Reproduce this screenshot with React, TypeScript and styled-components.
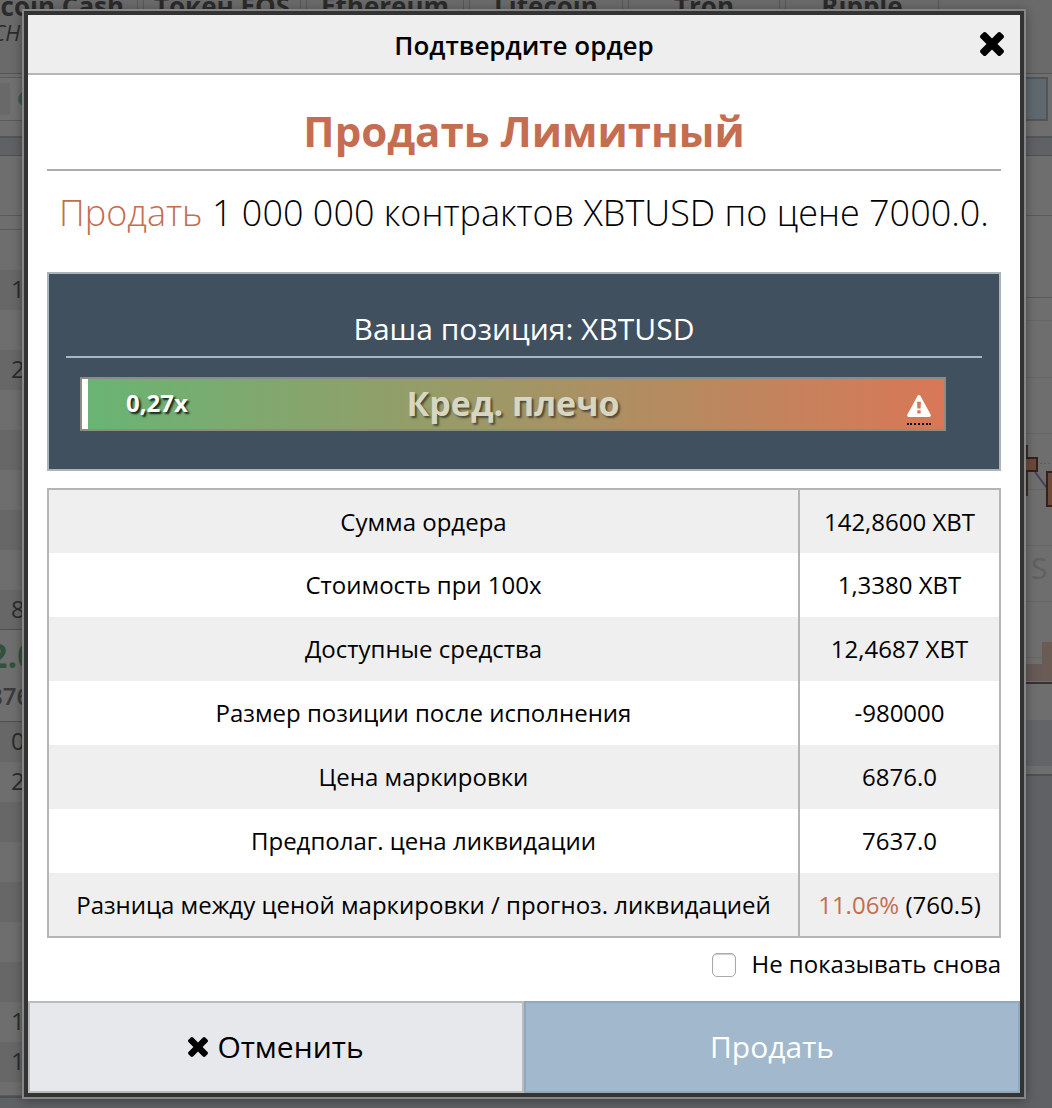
import React, { useState } from "react";
import styled, { createGlobalStyle } from "styled-components";

const GlobalStyle = createGlobalStyle`
  *, *::before, *::after { box-sizing: border-box; }
  body {
    margin: 0;
    background: #606164;
    color: #000;
    font-family: "Open Sans", "Noto Sans", sans-serif;
  }
`;

const Page = styled.div`
  position: relative;
  min-height: 100vh;
  overflow: hidden;
`;

/* ---------- dimmed trading screen ---------- */

const Screen = styled.div`
  display: flex;
  flex-direction: column;
  min-height: 100vh;
  color: #2b2b2b;
`;

const Markets = styled.nav`
  display: grid;
  grid-template-columns: 188px 158px 158px 154px 152px 154px;
  column-gap: 5px;
  height: 73px;
  margin-left: -50px;
  overflow: hidden;
  background: #6a6a6a;
`;

const Market = styled.div`
  display: flex;
  flex-direction: column;
  border: solid #585858;
  border-width: 0 1px;
  margin-top: -12px;
  font-size: 26px;
  line-height: 36px;
  font-weight: 700;
  text-align: center;
  white-space: nowrap;
`;

const Ticker = styled.span`
  padding-left: 28px;
  font-size: 22px;
  line-height: 16px;
  font-weight: 400;
  font-style: italic;
  text-align: left;
`;

const TradeBar = styled.div`
  display: flex;
  justify-content: space-between;
  height: 65px;
  padding: 3px 4px 15px 0;
  border: solid #555;
  border-width: 1px 0 2px;
  background: #6e6e6e;
`;

const TradeField = styled.div`
  display: flex;
  align-items: center;
  gap: 8px;
  width: 40%;
  border: solid #5a5a5a;
  border-width: 1px 0;
  background: #707070;

  &::before {
    content: "";
    width: 10px;
    height: 32px;
    background: #696969;
  }

  &::after {
    content: "";
    width: 14px;
    height: 14px;
    border-radius: 50%;
    background: #3c5a4e;
  }
`;

const TradeAction = styled.div`
  width: 20%;
  border: 2px solid #4e565c;
  background: #5f686e;
`;

const Panels = styled.div`
  display: flex;
  align-items: flex-start;
  gap: 20px;
  padding-top: 17px;
`;

const Panel = styled.section`
  flex: 1;
  border: solid #505050;
  border-width: 1px 0 2px;
  background: #6e6e6e;
`;

const PanelHead = styled.div<{ $height: number }>`
  height: ${(p) => p.$height}px;
  border-bottom: 1px solid #5a5a5a;
`;

const BookRow = styled.div<{ $dark?: boolean }>`
  height: 40px;
  padding-left: 11px;
  background: ${(p) => (p.$dark ? "#676767" : "#6e6e6e")};
  font-size: 24px;
  line-height: 38px;
`;

const LastPrice = styled.div`
  height: 93px;
  margin: -1px 0 0;
  border: solid #4f4f4f;
  border-width: 1px 0;
  overflow: hidden;
`;

const Price = styled.div`
  margin-left: -12px;
  color: #31513e;
  font-size: 34px;
  line-height: 50px;
  font-weight: 700;
`;

const MarkPrice = styled.div`
  margin-left: -11px;
  color: #3a3a3a;
  font-size: 24px;
  line-height: 32px;
  font-weight: 600;
`;

const Chart = styled.svg`
  display: block;
  margin-left: auto;
`;

const ChartTools = styled.div`
  height: 46px;
  margin: 36px 0 8px;
  background: #636468;
`;

const asks = ["", "1", "", "2", "", "", "", "", "", "8"];
const bids = ["0", "2", "", "", "", "", "", "1", "1"];

function TradingScreen() {
  return (
    <Screen aria-hidden="true">
      <Markets>
        <Market>
          Bitcoin Cash
          <Ticker>BCH</Ticker>
        </Market>
        <Market>Токен EOS</Market>
        <Market>Ethereum</Market>
        <Market>Litecoin</Market>
        <Market>Tron</Market>
        <Market>Ripple</Market>
      </Markets>
      <TradeBar>
        <TradeField />
        <TradeAction />
      </TradeBar>
      <Panels>
        <Panel>
          <PanelHead $height={60} />
          <PanelHead $height={14} />
          {asks.map((value, i) => (
            <BookRow key={i} $dark={i % 2 === 1}>
              {value}
            </BookRow>
          ))}
          <LastPrice>
            <Price>2.0</Price>
            <MarkPrice>876</MarkPrice>
          </LastPrice>
          {bids.map((value, i) => (
            <BookRow key={i} $dark={i % 2 === 0}>
              {value}
            </BookRow>
          ))}
          <PanelHead $height={14} />
        </Panel>
        <Panel>
          <PanelHead $height={60} />
          <PanelHead $height={82} />
          <Chart width="28" height="386" viewBox="0 0 28 386">
            {[22, 79, 135, 191, 247, 303, 359].map((y) => (
              <path key={y} d={`M0 ${y}.5H28`} stroke="#666" />
            ))}
            <path d="M0 165.500H28" stroke="#5a5a5a" strokeDasharray="2 2" />
            <path d="M3 147V198" stroke="#3d2c2a" strokeWidth="2" />
            <path d="M11 174L23 190" stroke="#4d3c58" strokeWidth="2" />
            <rect x="1" y="160" width="12" height="13" fill="#6d4a38" stroke="#33211d" strokeWidth="2" />
            <rect x="23" y="174" width="8" height="34" fill="#6d4a38" stroke="#33211d" strokeWidth="2" />
            <text x="7" y="281" fontSize="30" fill="#606060">S</text>
            <rect x="0" y="366" width="18" height="17" fill="#665956" />
            <rect x="18" y="344" width="10" height="39" fill="#6a5c55" />
            <path d="M0 385H28" stroke="#333" strokeWidth="2" />
          </Chart>
          <ChartTools />
        </Panel>
      </Panels>
    </Screen>
  );
}

/* ---------- confirmation dialog ---------- */

const Overlay = styled.div`
  position: absolute;
  inset: 0;
  padding: 9px 26px 9px 22px;
`;

const Dialog = styled.div`
  border: 2px solid #868686;
  background: #333;
  padding: 4px;
  box-shadow: 0 2px 10px rgba(0, 0, 0, 0.35);
`;

const Header = styled.header`
  display: flex;
  align-items: center;
  height: 60px;
  padding: 0 16px;
  border-bottom: 2px solid #b3b5b6;
  background: #eee;
`;

const HeaderTitle = styled.h2`
  flex: 1;
  margin: 0;
  padding: 2px 0 0 24px;
  font-size: 26px;
  line-height: 32px;
  font-weight: 600;
  text-align: center;
`;

const CloseButton = styled.button`
  display: flex;
  padding: 0;
  border: 0;
  background: none;
  color: #000;
  cursor: pointer;
`;

const Body = styled.div`
  padding: 22px 19px 21px;
  background: #fff;
`;

const OrderKind = styled.h1`
  margin: 0;
  padding: 2px 0 6px;
  border-bottom: 2px solid #acacac;
  color: #c46d51;
  font-size: 42px;
  line-height: 64px;
  font-weight: 700;
  text-align: center;
`;

const Summary = styled.p`
  margin: 12px 0 29px;
  font-size: 36px;
  line-height: 60px;
  font-weight: 300;
  text-align: center;
`;

const Sell = styled.span`
  color: #c46d51;
`;

const Position = styled.section`
  margin-bottom: 17px;
  padding: 32px 17px 38px;
  border: 2px solid #aab4bb;
  background: #40505f;
`;

const PositionTitle = styled.h3`
  margin: 0 0 19px;
  padding-bottom: 4px;
  border-bottom: 2px solid #a9b9c4;
  color: #fff;
  font-size: 30px;
  line-height: 46px;
  font-weight: 400;
  text-align: center;
`;

const Leverage = styled.div`
  display: grid;
  grid-template-columns: 1fr auto 1fr;
  height: 54px;
  margin: 0 36px 0 14px;
  border: 2px solid #8b8d84;
  background: linear-gradient(90deg, #68b574 0%, #d97757 100%);
  line-height: 48px;
  font-weight: 700;
  text-shadow: 2px 2px 2px rgba(0, 0, 0, 0.8);
`;

const LeverageValue = styled.span`
  padding-left: 38px;
  border-left: 6px solid #fff;
  color: #fff;
  font-size: 24px;
`;

const LeverageLabel = styled.span`
  color: #d6d6c2;
  font-size: 34px;
  text-shadow: 2px 2px 2px rgba(0, 0, 0, 0.5);
`;

const Risk = styled.span`
  align-self: end;
  justify-self: end;
  display: flex;
  margin: 0 13px 4px 0;
  padding-bottom: 6px;
  border-bottom: 2px dotted #000;
  color: #fff;
`;

const Details = styled.table`
  width: 100%;
  border: 2px solid #b5b5b5;
  border-collapse: collapse;
  font-size: 24px;
  line-height: 32px;
  text-align: center;
`;

const DetailRow = styled.tr`
  &:nth-child(odd) {
    background: #efefef;
  }
`;

const DetailName = styled.th`
  height: 64px;
  padding: 0 8px;
  border-right: 2px solid #b5b5b5;
  font-weight: 400;
`;

const DetailValue = styled.td`
  width: 201px;
  padding: 0;
  white-space: nowrap;
`;

const Mute = styled.label`
  display: flex;
  align-items: center;
  justify-content: flex-end;
  gap: 15px;
  margin-top: 10px;
  font-size: 24px;
  line-height: 32px;
`;

const Checkbox = styled.input`
  appearance: none;
  width: 24px;
  height: 24px;
  margin: 2px 0 0;
  border: 1px solid #aaa;
  border-radius: 5px;
  background: #fff;
  box-shadow: inset 0 1px 1px rgba(0, 0, 0, 0.2);

  &:checked {
    background: #a2b8cc;
  }
`;

const Footer = styled.footer`
  display: grid;
  grid-template-columns: 1fr 1fr;
`;

const FooterButton = styled.button<{ $primary?: boolean }>`
  display: flex;
  align-items: center;
  justify-content: center;
  gap: 9px;
  height: 92px;
  padding: 0;
  border: 2px solid ${(p) => (p.$primary ? "#8fa8bb" : "#b9bbbd")};
  background: ${(p) => (p.$primary ? "#a2b8cc" : "#e7e8ec")};
  color: ${(p) => (p.$primary ? "#fff" : "#000")};
  font-family: inherit;
  font-size: 30px;
  line-height: 44px;
  cursor: pointer;
`;

function TimesIcon({ size }: { size: number }) {
  return (
    <svg width={size} height={size} viewBox="302 366 1188 1188" fill="currentColor" aria-hidden="true">
      <path d="M1490 1322q0 40-28 68l-136 136q-28 28-68 28t-68-28l-294-294-294 294q-28 28-68 28t-68-28l-136-136q-28-28-28-68t28-68l294-294-294-294q-28-28-28-68t28-68l136-136q28-28 68-28t68 28l294 294 294-294q28-28 68-28t68 28l136 136q28 28 28 68t-28 68l-294 294 294 294q28 28 28 68z" />
    </svg>
  );
}

function WarningIcon() {
  return (
    <svg width="24" height="22" viewBox="0 0 1792 1664" fill="currentColor" role="img" aria-label="!">
      <path d="M1024 1375v-190q0-14-9.500-23.500t-22.500-9.500h-192q-13 0-22.500 9.500t-9.500 23.500v190q0 14 9.500 23.500t22.500 9.500h192q13 0 22.500-9.500t9.500-23.500zm-2-374l18-459q0-12-10-19-13-11-24-11h-220q-11 0-24 11-10 7-10 21l17 457q0 10 10 16.500t24 6.500h185q14 0 23.500-6.500t10.500-16.500zm-14-934l768 1408q35 63-2 126-17 29-46.500 46t-63.500 17h-1536q-34 0-63.500-17t-46.500-46q-37-63-2-126l768-1408q17-31 47-49t65-18 65 18 47 49z" />
    </svg>
  );
}

const details: { name: string; value: React.ReactNode }[] = [
  { name: "Сумма ордера", value: "142,8600 XBT" },
  { name: "Стоимость при 100x", value: "1,3380 XBT" },
  { name: "Доступные средства", value: "12,4687 XBT" },
  { name: "Размер позиции после исполнения", value: "-980000" },
  { name: "Цена маркировки", value: "6876.0" },
  { name: "Предполаг. цена ликвидации", value: "7637.0" },
  {
    name: "Разница между ценой маркировки / прогноз. ликвидацией",
    value: (
      <>
        <Sell>11.06%</Sell> (760.5)
      </>
    ),
  },
];

export default function App() {
  const [muted, setMuted] = useState(false);

  return (
    <Page>
      <GlobalStyle />
      <TradingScreen />
      <Overlay>
        <Dialog role="dialog" aria-modal="true" aria-labelledby="dialog-title">
          <Header>
            <HeaderTitle id="dialog-title">Подтвердите ордер</HeaderTitle>
            <CloseButton type="button" aria-label="Отменить">
              <TimesIcon size={24} />
            </CloseButton>
          </Header>
          <Body>
            <OrderKind>Продать Лимитный</OrderKind>
            <Summary>
              <Sell>Продать</Sell> 1 000 000 контрактов XBTUSD по цене 7000.0.
            </Summary>
            <Position>
              <PositionTitle>Ваша позиция: XBTUSD</PositionTitle>
              <Leverage>
                <LeverageValue>0,27x</LeverageValue>
                <LeverageLabel>Кред. плечо</LeverageLabel>
                <Risk>
                  <WarningIcon />
                </Risk>
              </Leverage>
            </Position>
            <Details>
              <tbody>
                {details.map((row) => (
                  <DetailRow key={row.name}>
                    <DetailName scope="row">{row.name}</DetailName>
                    <DetailValue>{row.value}</DetailValue>
                  </DetailRow>
                ))}
              </tbody>
            </Details>
            <Mute>
              <Checkbox type="checkbox" checked={muted} onChange={(e) => setMuted(e.target.checked)} />
              Не показывать снова
            </Mute>
          </Body>
          <Footer>
            <FooterButton type="button">
              <TimesIcon size={20} />
              Отменить
            </FooterButton>
            <FooterButton type="button" $primary>
              Продать
            </FooterButton>
          </Footer>
        </Dialog>
      </Overlay>
    </Page>
  );
}
